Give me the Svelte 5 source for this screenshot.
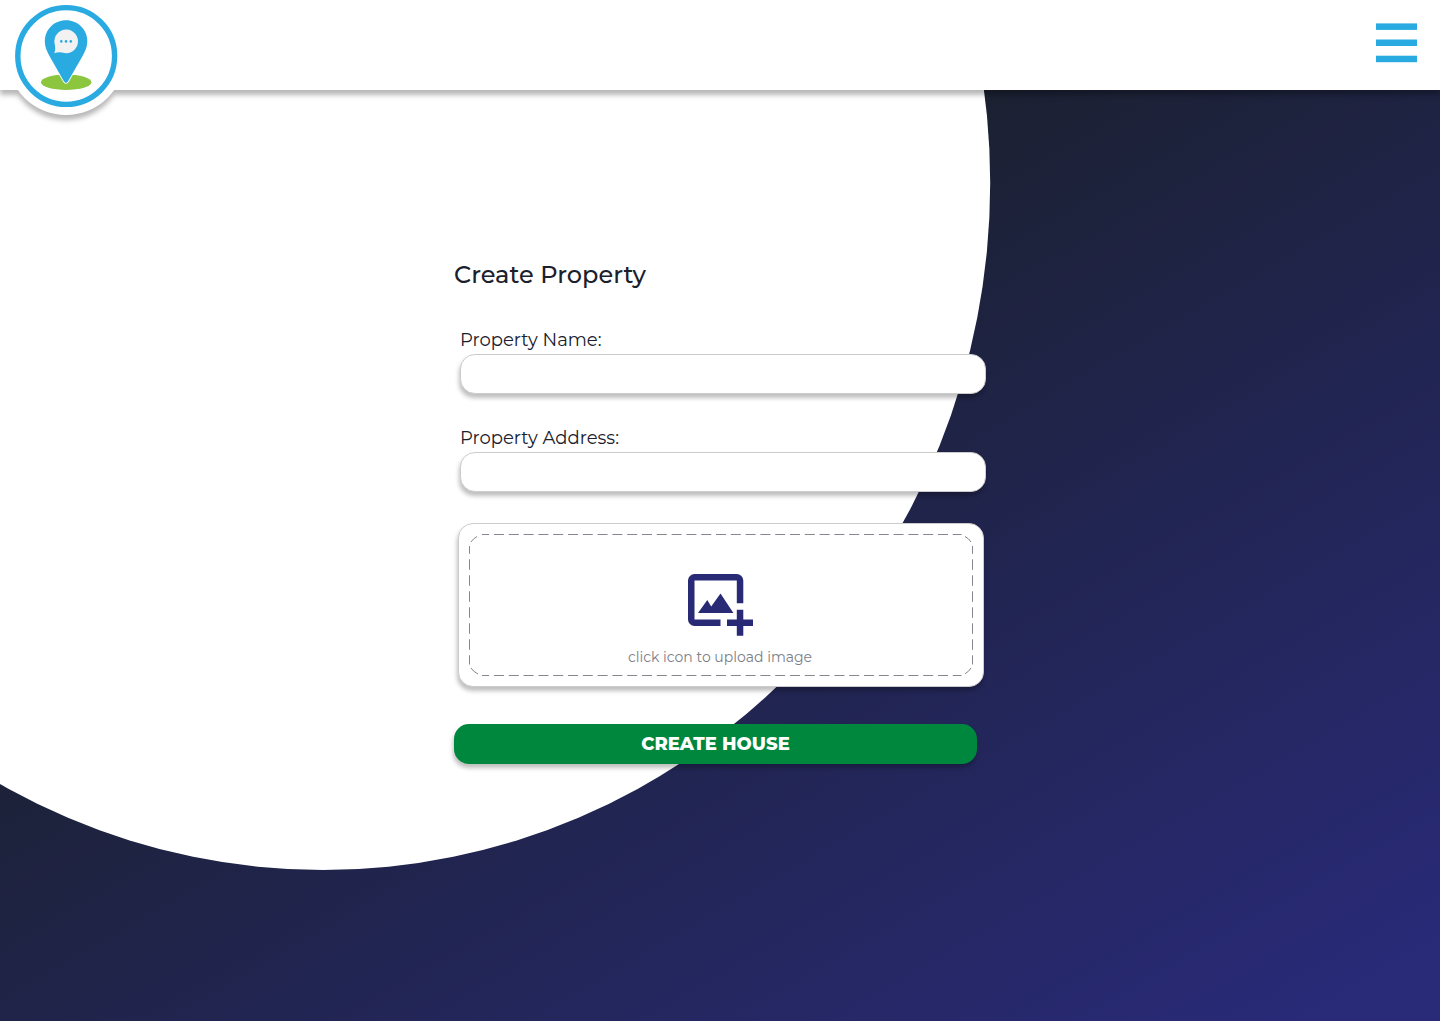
<script>
  let name = $state('');
  let address = $state('');
</script>

<div class="page">
  <svg class="backdrop" viewBox="0 0 1440 1024" aria-hidden="true">
    <ellipse cx="323.2" cy="183" rx="667" ry="687" fill="#fff" />
  </svg>

  <header>
    <a class="logo" href="#home" aria-label="Home">
      <svg width="118" height="118" viewBox="7 -3 118 118">
        <circle cx="66.2" cy="56" r="48.4" fill="#fff" stroke="#29abe2" stroke-width="5.4" />
        <ellipse cx="66.2" cy="82.2" rx="25.2" ry="7.7" fill="#8cc63f" />
        <path
          d="M66 20.2C54 20.2 44.8 29.6 44.8 41.2C44.8 47 47 51.5 50 57L63.6 80.8Q66 85 68.4 80.8L82 57C85 51.5 87.3 47 87.3 41.2C87.3 29.6 78 20.2 66 20.2Z"
          fill="#29abe2" stroke="#fff" stroke-width="1.8" paint-order="stroke"
        />
        <path d="M54.3 53.2Q56 49.5 54.5 43A11.8 11.8 0 1 1 62 52.4Q58 51.6 54.3 53.2Z" fill="#f2f2f2" />
        <g fill="#29abe2">
          <circle cx="61.3" cy="41.4" r="1.3" />
          <circle cx="66" cy="41.4" r="1.3" />
          <circle cx="70.8" cy="41.4" r="1.3" />
        </g>
      </svg>
    </a>
    <button class="menu" aria-label="Menu">
      <svg width="41" height="40" viewBox="0 0 41 40" fill="#29abe2">
        <rect y="0.4" width="41" height="6.5" />
        <rect y="16.5" width="41" height="6.5" />
        <rect y="32.7" width="41" height="6.5" />
      </svg>
    </button>
  </header>

  <form>
    <h1>Create Property</h1>
    <label class="field">
      <span>Property Name:</span>
      <input type="text" bind:value={name} />
    </label>
    <label class="field">
      <span>Property Address:</span>
      <input type="text" bind:value={address} />
    </label>

    <div class="upload">
      <svg class="dashes" viewBox="458 523 526 164" fill="none" stroke="#85878e" aria-hidden="true">
        <g stroke-dasharray="10 4.8" stroke-dashoffset="2.8">
          <path d="M482 534.5H961.5" />
          <path d="M482 675.5H961.5" />
        </g>
        <g stroke-dasharray="10.5 5.5" stroke-dashoffset="2.7">
          <path d="M469.5 546V664.5" />
          <path d="M972.5 546V664.5" />
        </g>
        <path d="M471 542Q473 538.7 477 536.5M965 536.5Q969 538.5 971 542M471 668Q473 671.5 478 674M965 673.8Q969 671.5 971 668" />
      </svg>
      <svg class="photo" width="65" height="62" viewBox="688 574 65 62" fill="#292a75">
        <path d="M720.5 626H694.5A6.5 6.5 0 0 1 688 619.5V580.5A6.5 6.5 0 0 1 694.5 574H736.8A6.5 6.5 0 0 1 743.3 580.5V603.2H736.8V580.5H694.5V619.5H720.5Z" />
        <path d="M698 613L707.3 600L711.2 606.4L720.5 593.4L733.4 613Z" />
        <path d="M736.8 609.7H743.3V619.4H753V625.9H743.3V635.8H736.8V625.9H727V619.4H736.8Z" />
      </svg>
      <p>click icon to upload image</p>
    </div>

    <button class="submit" type="button">CREATE HOUSE</button>
  </form>
</div>

<style>
  :global(body) {
    margin: 0;
  }
  .page {
    position: relative;
    height: 1021px;
    overflow: hidden;
    display: flex;
    flex-direction: column;
    background: linear-gradient(150deg, #1a202c 31%, #292a78 96%);
    font-family: Montserrat, Inter, sans-serif;
    color: #1a202c;
  }
  .backdrop {
    position: absolute;
    top: 0;
    left: 0;
    width: 1440px;
    height: 1024px;
  }
  header {
    position: relative;
    box-sizing: border-box;
    height: 90px;
    flex: none;
    display: flex;
    justify-content: space-between;
    align-items: flex-start;
    padding: 0 23px 0 7px;
    background: #fff;
    filter: drop-shadow(0 5px 2.5px rgba(0, 0, 0, 0.28));
  }
  .logo {
    display: block;
    width: 118px;
    height: 118px;
    margin-top: -3px;
    border-radius: 50%;
    background: #fff;
  }
  .logo svg {
    display: block;
  }
  button {
    border: 0;
    padding: 0;
    font-family: inherit;
    cursor: pointer;
  }
  .menu {
    margin-top: 23px;
    background: none;
  }
  .menu svg {
    display: block;
  }
  form {
    position: relative;
    width: 532px;
    margin: 169px 0 0 454px;
    display: flex;
    flex-direction: column;
  }
  h1 {
    margin: 0 0 39px;
    font-size: 24px;
    font-weight: 500;
    line-height: 32px;
    letter-spacing: 0.04px;
    white-space: nowrap;
  }
  .field {
    display: flex;
    flex-direction: column;
    gap: 4px;
    margin: 0 0 34px 6px;
    font-size: 18px;
    line-height: 20px;
  }
  input {
    box-sizing: border-box;
    height: 40px;
    width: 526px;
    padding: 0 14px;
    border: 1px solid #ccc;
    border-radius: 15px;
    background: #fff;
    box-shadow: -1px 4px 4px rgba(0, 0, 0, 0.25);
    font: inherit;
    outline: none;
  }
  .upload {
    position: relative;
    box-sizing: border-box;
    width: 526px;
    height: 164px;
    margin: -3px 0 37px 4px;
    padding: 50px 2px 0 0;
    display: flex;
    flex-direction: column;
    align-items: center;
    border: 1px solid #ccc;
    border-radius: 15px;
    background: #fff;
    box-shadow: -1px 4px 4px rgba(0, 0, 0, 0.25);
  }
  .dashes {
    position: absolute;
    top: -1px;
    left: -1px;
    width: 526px;
    height: 164px;
  }
  .photo {
    flex: none;
  }
  .upload p {
    margin: 11px 0 0;
    font-size: 14px;
    line-height: 20px;
    color: #7b7e86;
  }
  .submit {
    width: 523px;
    height: 40px;
    padding-bottom: 1px;
    border-radius: 15px;
    background: #00873e;
    box-shadow: -1px 4px 4px rgba(0, 0, 0, 0.25);
    color: #fff;
    font-size: 18px;
    font-weight: 800;
  }
</style>
